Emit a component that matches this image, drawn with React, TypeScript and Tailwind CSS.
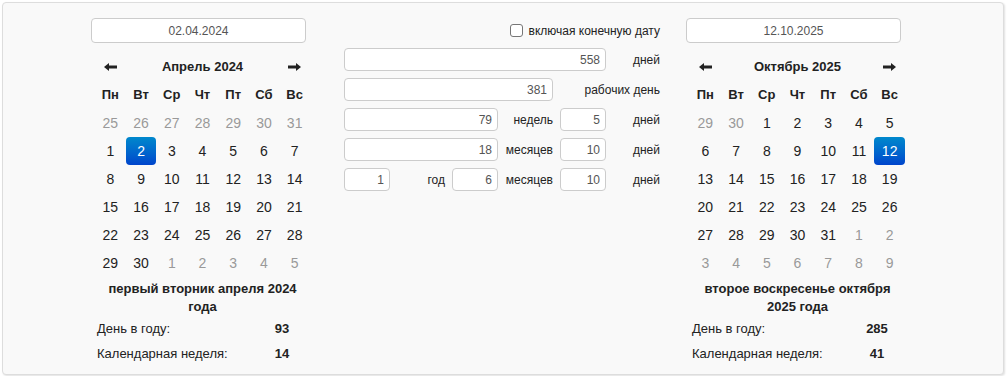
import React from 'react';

const weekDays = ['Пн', 'Вт', 'Ср', 'Чт', 'Пт', 'Сб', 'Вс'];
const monthNames = [
  'Январь', 'Февраль', 'Март', 'Апрель', 'Май', 'Июнь',
  'Июль', 'Август', 'Сентябрь', 'Октябрь', 'Ноябрь', 'Декабрь',
];

type Cell = { day: number; current: boolean };

// six weeks, starting on monday; a month that begins on monday still shows the previous week
const buildMonth = (year: number, month: number): Cell[] => {
  const first = new Date(year, month, 1);
  let offset = (first.getDay() + 6) % 7;
  if (offset === 0) offset = 7;
  const cells: Cell[] = [];
  for (let i = 0; i < 42; i++) {
    const d = new Date(year, month, 1 - offset + i);
    cells.push({ day: d.getDate(), current: d.getMonth() === month });
  }
  return cells;
};

const Arrow = ({ dir }: { dir: 'left' | 'right' }) => (
  <svg width="13" height="8" viewBox="0 0 13 8" className={dir === 'right' ? 'rotate-180' : ''}>
    <path d="M0 4 L5 0 L5 2.6 L13 2.6 L13 5.4 L5 5.4 L5 8 Z" fill="#222" />
  </svg>
);

const DateInput = ({ value }: { value: string }) => (
  <div className="w-[215px] h-[25px] bg-white border border-[#cccccc] rounded-[4px] flex items-center justify-center text-[12px] text-[#555]">
    {value}
  </div>
);

const Calendar = ({ year, month, selected }: { year: number; month: number; selected: number }) => {
  const cells = buildMonth(year, month);
  return (
    <div className="ml-[4px] w-[215px] mt-[10px] grid grid-cols-7 text-[#222]">
      <div className="h-[28px] flex items-center justify-center">
        <Arrow dir="left" />
      </div>
      <div className="col-span-5 h-[28px] flex items-center justify-center text-[13px] font-bold">
        {monthNames[month]} {year}
      </div>
      <div className="h-[28px] flex items-center justify-center">
        <Arrow dir="right" />
      </div>
      {weekDays.map((w) => (
        <div key={w} className="h-[28px] flex items-center justify-center text-[13px] font-bold">
          {w}
        </div>
      ))}
      {cells.map((c, i) => {
        const isSel = c.current && c.day === selected;
        return (
          <div
            key={i}
            className={
              'h-[28px] flex items-center justify-center text-[14px] rounded-[4px] ' +
              (isSel
                ? 'bg-linear-to-b from-[#0088cc] to-[#0044cc] text-white'
                : c.current
                ? 'text-[#222]'
                : 'text-[#999]')
            }
          >
            {c.day}
          </div>
        );
      })}
    </div>
  );
};

const Info = ({ text, dayOfYear, week }: { text: string; dayOfYear: number; week: number }) => (
  <div className="ml-[4px] w-[215px] mt-[3px] text-[13px] text-[#222]">
    <div className="text-center font-bold leading-[18px]">{text}</div>
    <div className="flex items-center h-[25px]">
      <div className="flex-1 pl-[2px]">День в году:</div>
      <div className="w-[40px] mr-[8px] text-center font-bold">{dayOfYear}</div>
    </div>
    <div className="flex items-center h-[25px]">
      <div className="flex-1 pl-[2px]">Календарная неделя:</div>
      <div className="w-[40px] mr-[8px] text-center font-bold">{week}</div>
    </div>
  </div>
);

const NumBox = ({ value, span = '' }: { value: number; span?: string }) => (
  <div
    className={
      'h-[23px] bg-white border border-[#cccccc] rounded-[4px] flex items-center justify-end pr-[5px] text-[12px] text-[#555] ' +
      span
    }
  >
    {value}
  </div>
);

const Label = ({ text, span = '' }: { text: string; span?: string }) => (
  <div className={'h-[23px] flex items-center justify-end pr-[7px] text-[12px] text-[#222] ' + span}>{text}</div>
);

const LastLabel = ({ text, span = '' }: { text: string; span?: string }) => (
  <div className={'h-[23px] flex items-center justify-end text-[12px] text-[#222] ' + span}>{text}</div>
);

const Difference = () => (
  <div className="w-[316px] ml-[33px]">
    <div className="h-[25px] flex items-center justify-end gap-[6px] text-[12px] text-[#222]">
      <span className="w-[13px] h-[13px] bg-white border border-[#767676] rounded-[3px]" />
      <span>включая конечную дату</span>
    </div>
    <div className="mt-[5px] grid grid-cols-[46px_62px_46px_62px_46px_54px] gap-y-[7px]">
      <NumBox value={558} span="col-span-5" />
      <LastLabel text="дней" />

      <NumBox value={381} span="col-span-4 mr-[7px]" />
      <LastLabel text="рабочих день" span="col-span-2" />

      <NumBox value={79} span="col-span-3" />
      <Label text="недель" />
      <NumBox value={5} />
      <LastLabel text="дней" />

      <NumBox value={18} span="col-span-3" />
      <Label text="месяцев" />
      <NumBox value={10} />
      <LastLabel text="дней" />

      <NumBox value={1} />
      <Label text="год" />
      <NumBox value={6} />
      <Label text="месяцев" />
      <NumBox value={10} />
      <LastLabel text="дней" />
    </div>
  </div>
);

const App = () => {
  return (
    <div className="w-[1008px] h-[376px] bg-white pt-[2px] pl-[2px] font-['Liberation_Sans',Arial,sans-serif]">
      <div className="w-[1002px] h-[373px] bg-[#f9f9f9] border border-[#dddddd] rounded-[4px] shadow-[1px_1px_2px_rgba(0,0,0,0.12)] pl-[88px] pt-[15px] flex items-start">
        <div className="w-[220px]">
          <DateInput value="02.04.2024" />
          <Calendar year={2024} month={3} selected={2} />
          <Info text="первый вторник апреля 2024 года" dayOfYear={93} week={14} />
        </div>
        <Difference />
        <div className="w-[220px] ml-[26px]">
          <DateInput value="12.10.2025" />
          <Calendar year={2025} month={9} selected={12} />
          <Info text="второе воскресенье октября 2025 года" dayOfYear={285} week={41} />
        </div>
      </div>
    </div>
  );
};

export default App;
